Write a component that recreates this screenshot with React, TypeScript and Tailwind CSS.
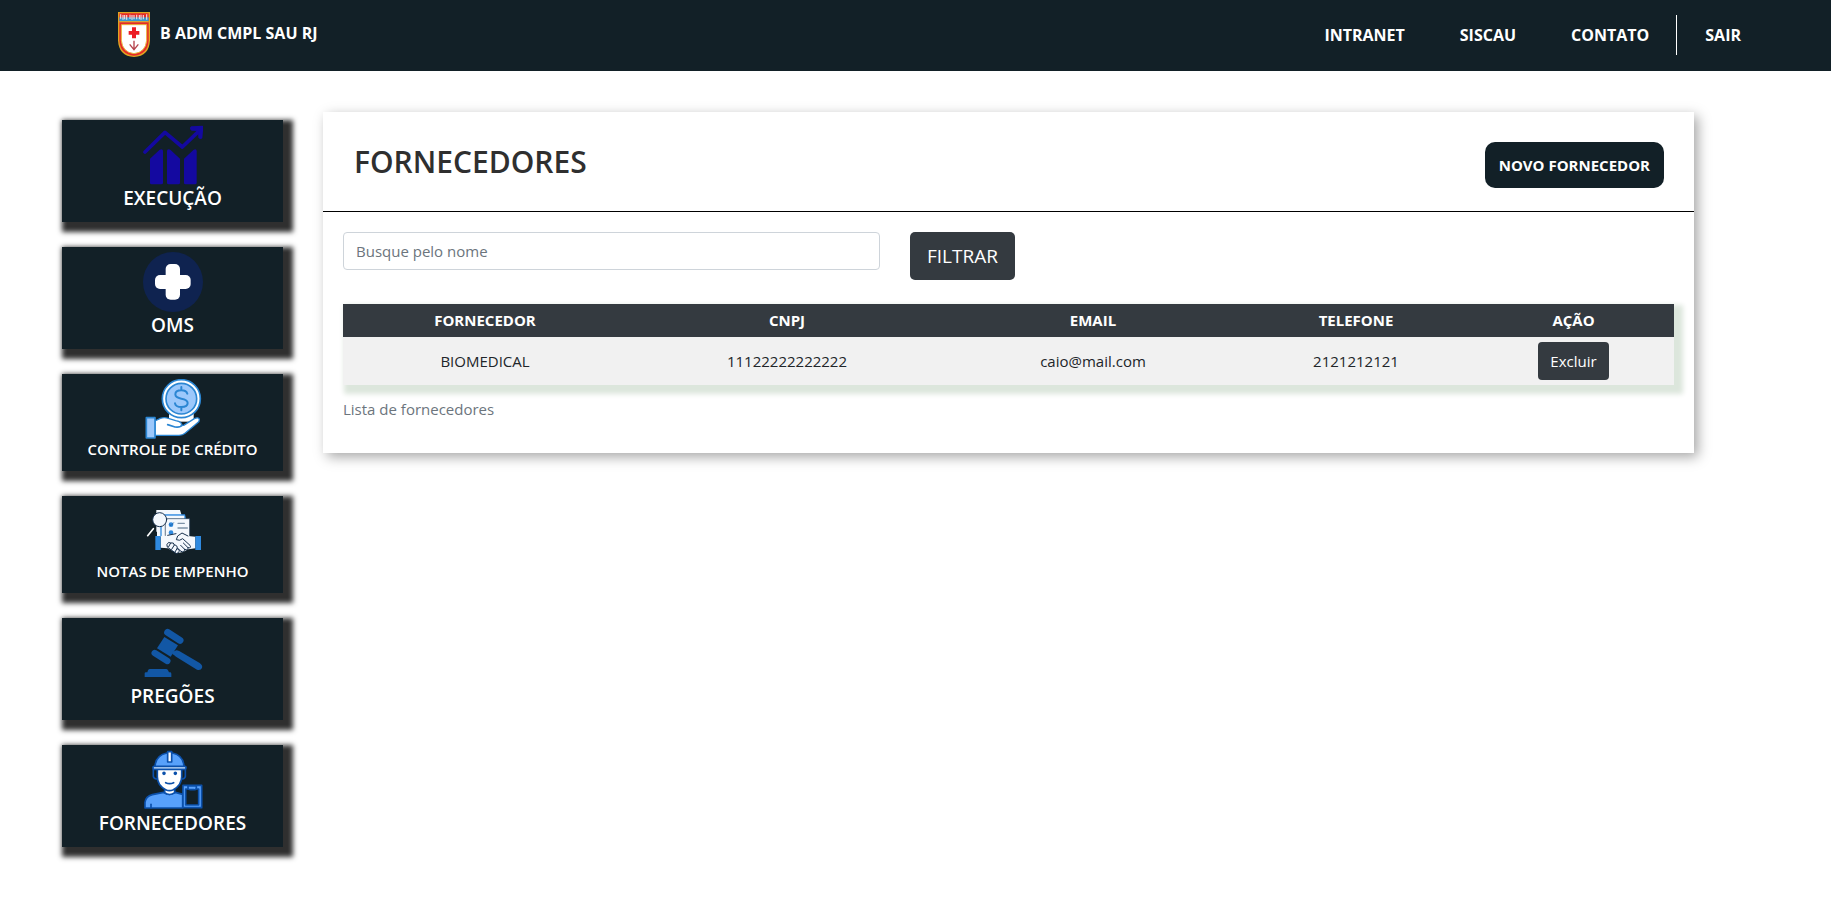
import type { ReactNode } from "react";

const ICON = "h-[60px] w-[60px]";

function ChartIcon() {
  return (
    <svg viewBox="278 60 180 180" className={ICON} aria-hidden="true" fill="#1409a0">
      <path d="M284 141 L344 82 L396 126 L448 76" fill="none" stroke="#1409a0" strokeWidth="11" strokeLinecap="round" strokeLinejoin="round" />
      <path d="M423 64 L456 62 Q459 62 459 66 L456 99 Q451 106 444 98 L443 78 L424 77 Q414 70 423 64Z" />
      <path d="M299 161 L328 134 Q338 130 338 139 V233 Q338 238 333 238 H304 Q299 238 299 233Z" />
      <path d="M350 139 Q350 130 360 134 L389 161 V233 Q389 238 384 238 H355 Q350 238 350 233Z" />
      <path d="M401 161 L430 134 Q439 130 439 139 V233 Q439 238 434 238 H406 Q401 238 401 233Z" />
    </svg>
  );
}

function HealthIcon() {
  return (
    <svg viewBox="279 51 180 180" className={ICON} aria-hidden="true">
      <circle cx="369" cy="141" r="90" fill="#0f2350" />
      <rect x="347" y="87" width="43" height="107" rx="15" fill="#fff" />
      <rect x="315" y="120" width="107" height="42" rx="15" fill="#fff" />
    </svg>
  );
}

function CreditIcon() {
  return (
    <svg viewBox="278 42 180 180" className={ICON} aria-hidden="true" strokeLinejoin="round" strokeLinecap="round">
      <path d="M356 145 H430 V170 H356Z" fill="#fff" />
      <path d="M314 168 L330 160 Q342 156 354 160 L376 167 Q397 171 393 182 L400 181 L432 161 Q444 155 447 163 Q448 169 440 175 L404 205 Q397 211 386 211 H314Z" fill="#fff" stroke="#2b86d3" strokeWidth="4" />
      <path d="M352 179 L374 186 Q391 188 395 180" fill="none" stroke="#2b86d3" strokeWidth="5" />
      <rect x="288" y="158" width="26" height="61" fill="#9cc8fb" stroke="#2b86d3" strokeWidth="5" />
      <circle cx="393" cy="101" r="57" fill="#fff" stroke="#2b86d3" strokeWidth="5" />
      <circle cx="393" cy="101" r="46" fill="#9cc8fb" stroke="#2b86d3" strokeWidth="5" />
      <path d="M393 66 V76 M393 126 V136 M411 86 Q408 76 393 76 Q375 76 375 88 Q375 98 393 101 Q412 104 412 114 Q412 126 393 126 Q376 126 374 115" fill="none" stroke="#2b86d3" strokeWidth="6" />
    </svg>
  );
}

function AgreementIcon() {
  return (
    <svg viewBox="278 48 180 180" className={ICON} aria-hidden="true" strokeLinejoin="round" strokeLinecap="round">
      <path d="M318 75 H389 L393 88 V140 H318Z" fill="#f4f8fd" />
      <path d="M332 88 H404 L407 101 V150 H332Z" fill="#2f8ae0" />
      <path d="M330 92 H402 V150 H330Z" fill="#f4f8fd" />
      <path d="M320 120 H345 V155 H320Z" fill="#f4f8fd" />
      <path d="M332 122 V152" stroke="#2f8ae0" strokeWidth="4" />
      <path d="M346 101 H418 V165 H346Z" fill="#f4f8fd" stroke="#17304d" strokeWidth="2" />
      <circle cx="362" cy="119" r="7" fill="#2f8ae0" />
      <circle cx="362" cy="143" r="7" fill="#2f8ae0" />
      <path d="M358 118 L362 122 L370 113" fill="none" stroke="#17508c" strokeWidth="2" />
      <path d="M383 115 H402 M383 129 H411" stroke="#7d92a8" strokeWidth="4" />
      <circle cx="328" cy="104" r="21" fill="#f4f8fd" stroke="#17304d" strokeWidth="3" />
      <path d="M309 131 L292 152" stroke="#fff" strokeWidth="5" />
      <path d="M331 154 L353 151 L377 146 L395 144 L413 153 L435 155 V190 L414 193 L398 201 L379 205 L352 190 L331 188Z" fill="#f4f8fd" />
      <path d="M377 146 L352 151 M413 153 L395 144 L382 153 L378 164 Q388 169 397 161 L419 181 Q424 190 413 188 L399 174 M413 188 Q414 198 403 193 L391 181 M403 193 Q402 204 392 199 L382 190 M350 178 Q354 168 361 174 Q371 171 372 180 Q383 181 380 191 Q391 194 384 203 L378 206 L352 187Z M361 174 L355 185 M372 180 L364 193 M380 191 L374 201" fill="none" stroke="#17304d" strokeWidth="3" />
      <path d="M315 153 H331 V195 H315Z M435 153 H452 V195 H435Z" fill="#2f8ae0" />
    </svg>
  );
}

function GavelIcon() {
  return (
    <svg viewBox="278 54 180 180" className={ICON} aria-hidden="true" fill="#1257a5">
      <path d="M352 82 L389 106" stroke="#1257a5" strokeWidth="21" strokeLinecap="round" />
      <path d="M313 144 L351 168" stroke="#1257a5" strokeWidth="19" strokeLinecap="round" />
      <path d="M342 96 L383 121 L361 155 L320 130Z" />
      <path d="M366 141 L378 136 Q382 136 388 139 L448 174 Q458 181 455 189 Q451 197 440 194 L377 155 Q372 150 366 147Z" />
      <path d="M283 216 V205 Q283 202 287 202 H291 L293 196 Q295 192 299 192 H347 Q351 192 353 196 L356 202 H359 Q363 202 363 206 V216Z" />
    </svg>
  );
}

function WorkerIcon() {
  return (
    <svg viewBox="278 45 180 180" className={ICON} aria-hidden="true" stroke="#0b50ab" strokeWidth="5" strokeLinejoin="round" strokeLinecap="round">
      <path d="M284 219 V202 Q286 184 306 179 L340 172 Q357 184 375 172 L397 178 V219Z" fill="#58a1fb" />
      <path d="M302 208 V218" fill="none" />
      <path d="M343 158 V173 Q358 184 373 173 V158Z" fill="#fff" />
      <path d="M309 103 V124 Q310 131 319 132 M405 103 V124 Q404 131 396 132" fill="none" />
      <path d="M321 101 H394 V125 Q394 150 369 164 Q357 170 346 164 Q321 150 321 125Z" fill="#fff" />
      <path d="M314 96 Q315 61 350 54 H366 Q400 61 401 96Z" fill="#58a1fb" />
      <rect x="308" y="94" width="99" height="9" rx="3" fill="#cfe4fd" />
      <path d="M352 50 H364 V81 H352Z" fill="#fff" />
      <circle cx="341" cy="115" r="3" fill="#0b50ab" />
      <circle cx="375" cy="115" r="3" fill="#0b50ab" />
      <path d="M346 143 Q358 149 370 143" fill="none" />
      <rect x="398" y="151" width="56" height="67" fill="#58a1fb" />
      <rect x="406" y="162" width="39" height="48" fill="#122027" />
      <path d="M413 153 H438 V160 Q436 165 430 164 H420 Q414 164 413 160Z" fill="#58a1fb" />
    </svg>
  );
}

function Crest() {
  return (
    <svg viewBox="0 0 96 135" className="h-[45px] w-8" aria-hidden="true">
      <path d="M0 0 H96 V85 Q94 133 48 135 Q2 133 0 85Z" fill="#e0a422" />
      <path d="M4 4 H92 V85 Q89 129 48 131 Q7 129 4 85Z" fill="#e62a27" />
      <path d="M4 16 H92 V27 H4Z" fill="#3698d2" />
      <path d="M4 27 H92 V31 H4Z" fill="#d6a53a" />
      <path d="M8 7 V20 M15 9 V23 M20 9 V22 M26 9 V23 M36 8 V21 M42 9 V23 M48 9 V22 M56 8 V22 M64 9 V22 M69 8 V23 M76 9 V22 M86 7 V23" stroke="#f2dcdc" strokeWidth="3.5" />
      <path d="M10 38 H86 V85 Q83 121 48 125 Q13 121 10 85Z" fill="#fff" stroke="#e8b43a" strokeWidth="3" />
      <path d="M42 46 H54 V57 H64 V68 H54 V79 H42 V68 H32 V57 H42Z" fill="#ec1c24" />
      <path d="M48 86 V114 M35 97 L48 113 L61 97" fill="none" stroke="#b5434c" strokeWidth="4" />
    </svg>
  );
}

type MenuItem = { label: string; icon: ReactNode; small?: boolean };

const menu: MenuItem[] = [
  { label: "EXECUÇÃO", icon: <ChartIcon /> },
  { label: "OMS", icon: <HealthIcon /> },
  { label: "CONTROLE DE CRÉDITO", icon: <CreditIcon />, small: true },
  { label: "NOTAS DE EMPENHO", icon: <AgreementIcon />, small: true },
  { label: "PREGÕES", icon: <GavelIcon /> },
  { label: "FORNECEDORES", icon: <WorkerIcon /> },
];

const suppliers = [
  { name: "BIOMEDICAL", cnpj: "11122222222222", email: "caio@mail.com", phone: "2121212121" },
];

function Header() {
  return (
    <header className="flex h-[71px] items-center justify-between bg-[#122027] pr-[90px] pb-0.5 pl-[118px] text-base font-bold text-white">
      <a href="#inicio" className="flex items-center gap-2.5">
        <Crest />
        <span className="pb-1">B ADM CMPL SAU RJ</span>
      </a>
      <nav className="flex items-center">
        <div className="flex h-10 items-center gap-[55px] border-r border-white pr-[27px]">
          <a href="#intranet">INTRANET</a>
          <a href="#siscau">SISCAU</a>
          <a href="#contato">CONTATO</a>
        </div>
        <a href="#sair" className="pl-7">SAIR</a>
      </nav>
    </header>
  );
}

export default function App() {
  return (
    <div className="bg-white font-['Open_Sans','Noto_Sans',sans-serif] text-[15px] leading-6 text-[#212529]">
      <Header />
      <div className="flex items-start gap-10 pt-[41px] pr-[137px] pb-10 pl-[62px]">
        <nav aria-label="Menu" className="mt-2 flex w-[221px] shrink-0 flex-col gap-[25px]">
          {menu.map((item) => (
            <a
              key={item.label}
              href="#menu"
              className="flex flex-col items-center gap-px bg-[#122027] pt-[5px] pb-3 text-white shadow-[5px_5px_5px_5px_#2f2f2f]"
            >
              {item.icon}
              <span className={item.small ? "text-[15px] leading-[19px] font-semibold" : "text-[19px] leading-6 font-semibold"}>
                {item.label}
              </span>
            </a>
          ))}
        </nav>

        <main className="min-w-0 flex-1 bg-white pb-8 shadow-[4px_4px_12px_0px_rgba(0,0,0,0.35)]">
          <div className="flex h-[100px] items-start justify-between border-b border-black pt-[30px] pr-[30px] pl-[31px]">
            <h1 className="text-[30px] leading-10 font-semibold text-[#2f2f2f]">FORNECEDORES</h1>
            <button type="button" className="h-[46px] rounded-[10px] bg-[#122027] px-3.5 font-bold text-white">
              NOVO FORNECEDOR
            </button>
          </div>

          <div className="px-5 pt-5">
            <form className="flex items-start gap-[30px]" onSubmit={(e) => e.preventDefault()}>
              <input
                type="text"
                aria-label="Busque pelo nome"
                placeholder="Busque pelo nome"
                className="h-[38px] w-[537px] rounded border border-[#ced4da] bg-white px-3 placeholder:text-[#6c757d]"
              />
              <button type="submit" className="h-12 rounded-[5px] bg-[#343a40] px-[17px] text-[19px] text-white">
                FILTRAR
              </button>
            </form>

            <table className="mt-6 w-full table-fixed text-center shadow-[5px_5px_5px_4px_#dce6dc]">
              <colgroup>
                <col className="w-[284px]" />
                <col className="w-[320px]" />
                <col className="w-[292px]" />
                <col className="w-[234px]" />
                <col className="w-[201px]" />
              </colgroup>
              <thead className="bg-[#343a40] text-white">
                <tr className="h-[33px]">
                  <th scope="col" className="pb-0.5">FORNECEDOR</th>
                  <th scope="col" className="pb-0.5">CNPJ</th>
                  <th scope="col" className="pb-0.5">EMAIL</th>
                  <th scope="col" className="pb-0.5">TELEFONE</th>
                  <th scope="col" className="pb-0.5">AÇÃO</th>
                </tr>
              </thead>
              <tbody>
                {suppliers.map((s) => (
                  <tr key={s.cnpj} className="h-12 bg-[#f1f1f1]">
                    <td>{s.name}</td>
                    <td>{s.cnpj}</td>
                    <td>{s.email}</td>
                    <td>{s.phone}</td>
                    <td>
                      <button type="button" className="h-[38px] rounded bg-[#343a40] px-3 align-middle text-white">
                        Excluir
                      </button>
                    </td>
                  </tr>
                ))}
              </tbody>
            </table>
            <p className="pt-3 text-[#6c757d]">Lista de fornecedores</p>
          </div>
        </main>
      </div>
    </div>
  );
}
